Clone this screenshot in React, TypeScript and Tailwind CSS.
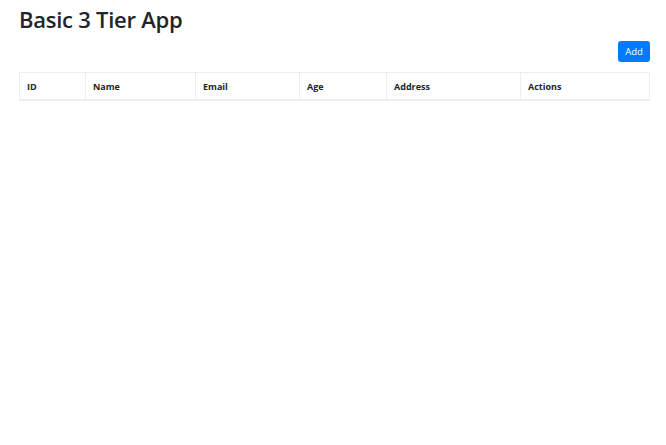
const columns = [
  { label: 'ID', width: 'w-[66px]' },
  { label: 'Name', width: 'w-[110px]' },
  { label: 'Email', width: 'w-[104px]' },
  { label: 'Age', width: 'w-[87px]' },
  { label: 'Address', width: 'w-[134px]' },
  { label: 'Actions', width: '' },
];

export default function App() {
  return (
    <div className="min-h-screen bg-white pl-[19px] pr-[16px] font-['Open_Sans','Liberation_Sans',sans-serif] text-[#212529]">
      <h1 className="pt-[3px] text-[22px] font-semibold leading-[32px] tracking-[-0.25px]">
        Basic 3 Tier App
      </h1>

      <div className="mt-[6px] flex justify-end">
        <button className="h-[21px] w-[32px] rounded-[3px] bg-[#007bff] text-[9.5px] leading-none text-white">
          Add
        </button>
      </div>

      <table className="mt-[10px] w-full border-collapse border border-[#eceeef] text-left">
        <thead>
          <tr className="border-b-2 border-[#eceeef]">
            {columns.map((col) => (
              <th
                key={col.label}
                className={`${col.width} border border-[#eceeef] px-[7px] pt-[2px] h-[27px] text-[9px] font-bold`}
              >
                {col.label}
              </th>
            ))}
          </tr>
        </thead>
        <tbody></tbody>
      </table>
    </div>
  );
}
